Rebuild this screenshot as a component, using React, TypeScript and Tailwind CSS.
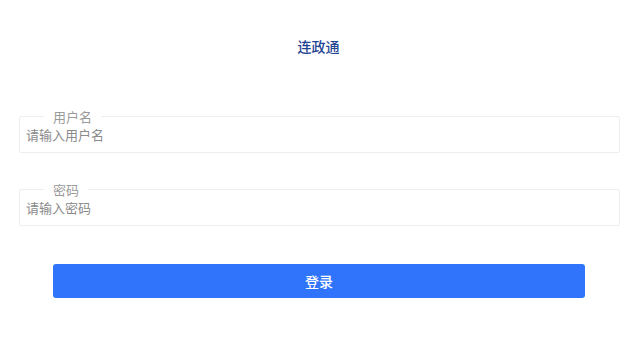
import React from "react";

const font = { fontFamily: '"Noto Sans CJK SC", "Noto Sans", sans-serif' };

function Field({ label, placeholder, type }: { label: string; placeholder: string; type?: string }) {
  return (
    <fieldset className="ml-[19px] w-[601px] border border-[#eeeeee] rounded-[2px] px-[6px] pb-[7px]">
      <legend className="ml-[18px] px-[9px] text-[13px] leading-[17px] text-[#9a9a9a]">{label}</legend>
      <input
        type={type ?? "text"}
        placeholder={placeholder}
        className="block w-full h-[20px] text-[13px] leading-[20px] outline-none bg-transparent placeholder:text-[#8a8a8a] text-[#333]"
        style={font}
      />
    </fieldset>
  );
}

export default function App() {
  return (
    <div className="w-[637px] h-[346px] bg-white" style={font}>
      <div className="pt-[36px] h-[20px] box-content text-center text-[14px] leading-[20px] font-medium text-[#1f4493]">
        连政通
      </div>
      <div className="mt-[52px]">
        <Field label="用户名" placeholder="请输入用户名" />
      </div>
      <div className="mt-[28px]">
        <Field label="密码" placeholder="请输入密码" type="password" />
      </div>
      <button
        className="mt-[38px] ml-[53px] w-[532px] h-[34px] rounded-[3px] bg-[#2f74fb] text-white text-[14px] font-medium flex items-center justify-center"
        style={font}
      >
        登录
      </button>
    </div>
  );
}
